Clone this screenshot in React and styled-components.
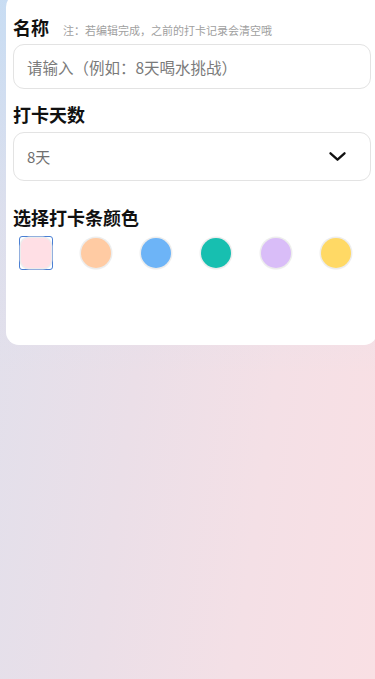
import React, { useState } from "react";
import styled, { createGlobalStyle } from "styled-components";

const Global = createGlobalStyle`
  html, body { margin: 0; padding: 0; height: 100%; }
  body {
    font-family: "Noto Sans CJK SC", "Noto Sans", sans-serif;
    -webkit-font-smoothing: antialiased;
  }
  #root { min-height: 100%; }
`;

const Page = styled.div`
  min-height: 679px;
  box-sizing: border-box;
  padding: 0 0 0 6px;
  overflow: hidden;
  background:
    linear-gradient(180deg, rgba(196, 220, 244, 0.85) 0%, rgba(210, 222, 240, 0.4) 30%, rgba(225, 224, 236, 0) 55%),
    linear-gradient(98deg, #e0e0ec 0%, #ebdfe8 40%, #f4e0e6 70%, #f9e0e4 100%);
`;

const Card = styled.div`
  margin-top: -6px;
  width: 371px;
  height: 351px;
  box-sizing: border-box;
  background: #ffffff;
  border-radius: 13px;
  padding: 20px 6px 0 7px;
  display: flex;
  flex-direction: column;
`;

const LabelRow = styled.div`
  display: flex;
  align-items: baseline;
  gap: 14px;
  height: 26px;
`;

const Label = styled.div`
  font-size: 18px;
  font-weight: 700;
  color: #111;
  line-height: 26px;
`;

const Hint = styled.span`
  font-size: 11px;
  color: #a0a0a0;
  line-height: 26px;
`;

const Field = styled.div`
  margin-top: ${(p) => p.$mt}px;
  height: ${(p) => p.$h}px;
  box-sizing: border-box;
  border: 1px solid #e3e3e3;
  border-radius: 11px;
  display: flex;
  align-items: center;
  justify-content: space-between;
  padding: 0 24px 0 13px;
  background: #fff;
`;

const Placeholder = styled.span`
  font-size: 15.5px;
  color: #7a7a7a;
`;

const Value = styled.span`
  font-size: 15px;
  color: #707070;
`;

const Section = styled.div`
  margin-top: ${(p) => p.$mt}px;
`;

const Swatches = styled.div`
  margin-top: 6px;
  display: flex;
  align-items: center;
  padding-left: 6px;
  gap: 26px;
`;

const SwatchBox = styled.div`
  width: 34px;
  height: 34px;
  box-sizing: border-box;
  display: flex;
  align-items: center;
  justify-content: center;
  border: 1.5px solid ${(p) => (p.$active ? "#4a7fd4" : "transparent")};
  border-radius: 3px;
  cursor: pointer;
`;

const Dot = styled.div`
  width: 30px;
  height: 30px;
  background: ${(p) => p.$c};
  border-radius: ${(p) => (p.$active ? "8px" : "50%")};
  box-shadow: 0 0 0 1.5px rgba(235, 235, 235, 0.9), 0 1px 2px rgba(0, 0, 0, 0.06);
`;

const colors = ["#ffdfe5", "#ffcba3", "#6db4f7", "#17bfb0", "#d9bdf8", "#ffd965"];

export default function App() {
  const [active, setActive] = useState(0);
  return (
    <>
      <Global />
      <Page>
        <Card>
          <LabelRow>
            <Label>名称</Label>
            <Hint>注：若编辑完成，之前的打卡记录会清空哦</Hint>
          </LabelRow>
          <Field $mt={4} $h={45}>
            <Placeholder>请输入（例如：8天喝水挑战）</Placeholder>
          </Field>
          <Section $mt={12}>
            <Label>打卡天数</Label>
          </Section>
          <Field $mt={5} $h={49}>
            <Value>8天</Value>
            <svg width="17" height="9" viewBox="0 0 17 9" fill="none">
              <path d="M1.5 1.3 L8.5 7.7 L15.5 1.3" stroke="#111" strokeWidth="2.3" strokeLinecap="round" strokeLinejoin="round" />
            </svg>
          </Field>
          <Section $mt={23}>
            <Label>选择打卡条颜色</Label>
          </Section>
          <Swatches>
            {colors.map((c, i) => (
              <SwatchBox key={c} $active={i === active} onClick={() => setActive(i)}>
                <Dot $c={c} $active={i === active} />
              </SwatchBox>
            ))}
          </Swatches>
        </Card>
      </Page>
    </>
  );
}
